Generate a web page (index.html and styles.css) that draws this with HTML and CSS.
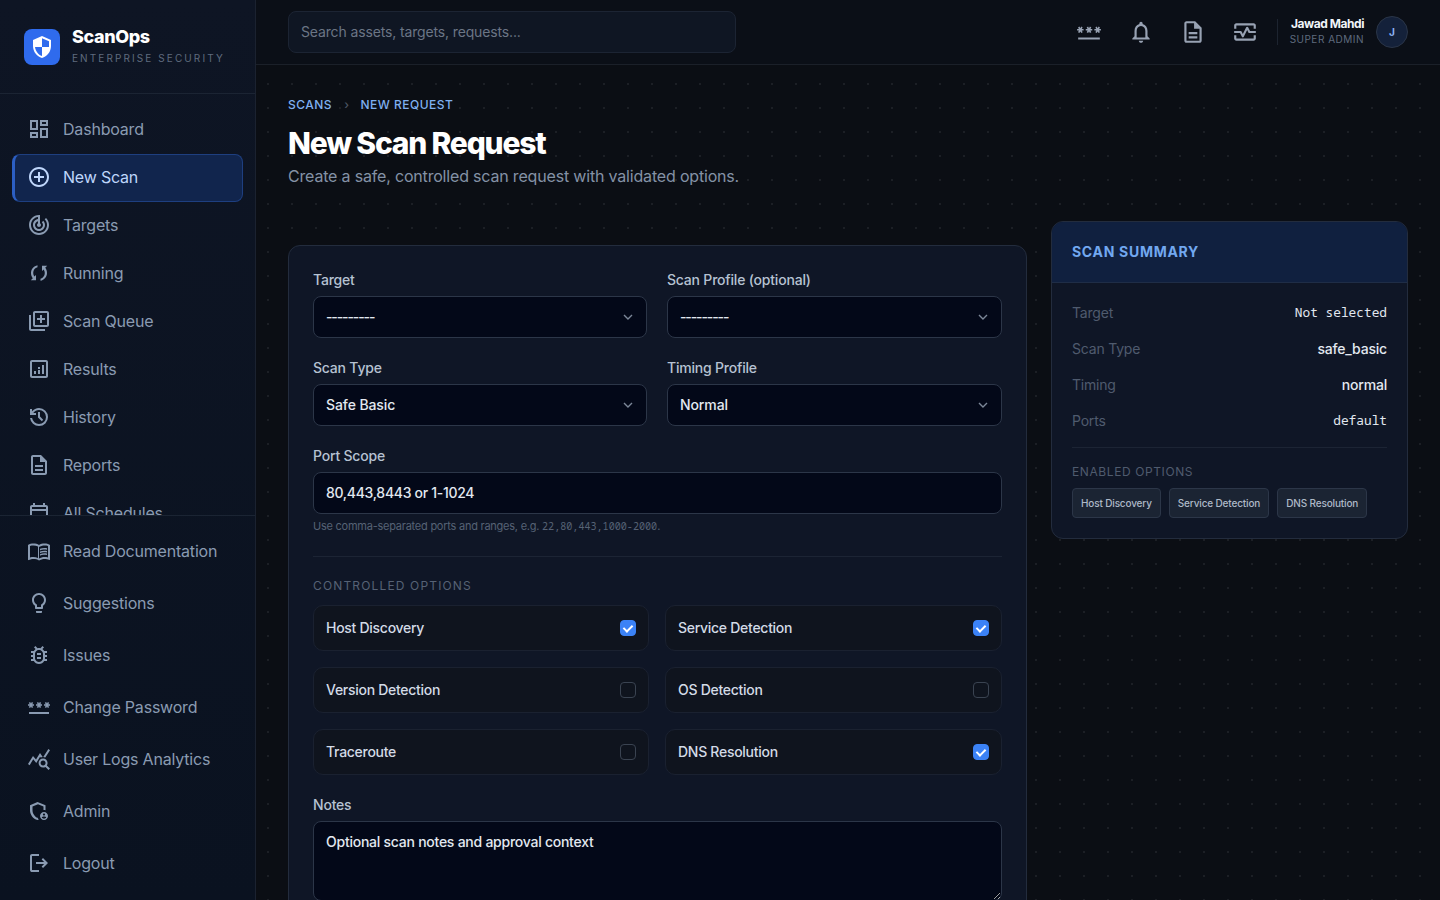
FILE: index.html
```html
<!DOCTYPE html>
<html lang="en">
<head>
  <meta charset="UTF-8" />
  <meta name="viewport" content="width=device-width, initial-scale=1.0"/>
  <title>ScanOps - New Scan Request</title>
  <link rel="stylesheet" href="styles.css">
</head>
<body>

<div class="app">

  <!-- Sidebar -->
  <aside class="sidebar">
    <div class="brand">
      <div class="brand-logo">
        <svg viewBox="0 0 24 24" width="24" height="24"><path fill="#fff" transform="translate(24,0) scale(-1,1)" d="M12 1L3 5v6c0 5.55 3.84 10.74 9 12 5.16-1.26 9-6.45 9-12V5l-9-4zm0 10.99h7c-.53 4.12-3.28 7.79-7 8.94V12H5V6.3l7-3.11v8.8z"/></svg>
      </div>
      <div class="brand-text">
        <div class="brand-name">ScanOps</div>
        <div class="brand-sub">ENTERPRISE SECURITY</div>
      </div>
    </div>

    <nav class="nav-main">
      <a class="nav-item" href="#"><svg viewBox="0 0 24 24"><path d="M19 5v2h-4V5h4M9 5v6H5V5h4m10 8v6h-4v-6h4M9 17v2H5v-2h4M21 3h-8v6h8V3zM11 3H3v10h8V3zm10 8h-8v10h8V11zm-10 4H3v6h8v-6z"/></svg>Dashboard</a>
      <a class="nav-item active" href="#"><svg viewBox="0 0 24 24"><path d="M13 7h-2v4H7v2h4v4h2v-4h4v-2h-4V7zm-1-5C6.48 2 2 6.48 2 12s4.48 10 10 10 10-4.48 10-10S17.52 2 12 2zm0 18c-4.41 0-8-3.59-8-8s3.59-8 8-8 8 3.59 8 8-3.59 8-8 8z"/></svg>New Scan</a>
      <a class="nav-item" href="#"><svg viewBox="0 0 24 24"><path d="M19.07 4.93l-1.41 1.41C19.1 7.79 20 9.79 20 12c0 4.42-3.58 8-8 8s-8-3.58-8-8c0-4.08 3.05-7.44 7-7.93v2.02C8.16 6.57 6 9.03 6 12c0 3.31 2.69 6 6 6s6-2.69 6-6c0-1.66-.67-3.16-1.76-4.24l-1.41 1.41C15.55 9.9 16 10.9 16 12c0 2.21-1.79 4-4 4s-4-1.79-4-4c0-1.86 1.28-3.41 3-3.86v2.14c-.6.35-1 .98-1 1.72 0 1.1.9 2 2 2s2-.9 2-2c0-.74-.4-1.38-1-1.72V2h-1C6.48 2 2 6.48 2 12s4.48 10 10 10 10-4.48 10-10c0-2.76-1.12-5.26-2.93-7.07z"/></svg>Targets</a>
      <a class="nav-item" href="#"><svg viewBox="0 0 24 24"><path d="M10.500 4.200v2.100C7.900 7 6.200 9.300 6.200 12c0 1.300.4 2.500 1.100 3.500L9 14v5.200H3.800l2-2C4.600 15.800 4 14 4 12c0-3.800 2.800-7 6.500-7.800zM13.500 19.800v-2.100C16.100 17 17.800 14.700 17.800 12c0-1.300-.4-2.500-1.100-3.500L15 10V4.800h5.200l-2 2C19.400 8.200 20 10 20 12c0 3.800-2.800 7-6.500 7.800z"/></svg>Running</a>
      <a class="nav-item" href="#"><svg viewBox="0 0 24 24"><path d="M4 6H2v14c0 1.100.9 2 2 2h14v-2H4V6zm16-4H8c-1.100 0-2 .9-2 2v12c0 1.100.9 2 2 2h12c1.100 0 2-.9 2-2V4c0-1.100-.9-2-2-2zm0 14H8V4h12v12zM13 14h2v-3h3V9h-3V6h-2v3h-3v2h3z"/></svg>Scan Queue</a>
      <a class="nav-item" href="#"><svg viewBox="0 0 24 24"><path d="M19 3H5c-1.100 0-2 .9-2 2v14c0 1.100.9 2 2 2h14c1.100 0 2-.9 2-2V5c0-1.100-.9-2-2-2zm0 16H5V5h14v14zM7 14h2v3H7zM15 8h2v9h-2zM11 13h2v4h-2zM11 10h2v2h-2z"/></svg>Results</a>
      <a class="nav-item" href="#"><svg viewBox="0 0 24 24"><path d="M12 21q-3.450 0-6.012-2.287T3.050 13H5.100q.35 2.600 2.313 4.300T12 19q2.925 0 4.963-2.037T19 12t-2.037-4.963T12 5q-1.725 0-3.225.8T6.250 8H9v2H3V4h2v2.350q1.275-1.600 3.113-2.475T12 3q3.750 0 6.375 2.625T21 12t-2.625 6.375T12 21m2.800-4.800L11 12.400V7h2v4.600l3.200 3.200z"/></svg>History</a>
      <a class="nav-item" href="#"><svg viewBox="0 0 24 24"><path d="M8 16h8v2H8zm0-4h8v2H8zm6-10H6c-1.100 0-2 .9-2 2v16c0 1.100.89 2 1.990 2H18c1.100 0 2-.9 2-2V8l-6-6zm4 18H6V4h7v5h5v11z"/></svg>Reports</a>
      <a class="nav-item" href="#"><svg viewBox="0 0 24 24"><path d="M19 4h-1V2h-2v2H8V2H6v2H5c-1.100 0-2 .9-2 2v14c0 1.100.9 2 2 2h14c1.100 0 2-.9 2-2V6c0-1.100-.9-2-2-2zm0 16H5V10h14v10zm0-12H5V6h14v2z"/></svg>All Schedules</a>
    </nav>

    <nav class="nav-bottom">
      <a class="nav-item" href="#"><svg viewBox="0 0 24 24" fill-rule="evenodd"><path d="M21 5c-1.110-.35-2.330-.5-3.500-.5-1.950 0-4.050.4-5.500 1.500-1.450-1.100-3.550-1.500-5.500-1.500S2.450 4.900 1 6v14.650c0 .25.25.5.5.5.1 0 .15-.05.25-.05C3.100 20.450 5.050 20 6.500 20c1.950 0 4.050.4 5.500 1.500 1.350-.85 3.800-1.500 5.500-1.500 1.650 0 3.350.3 4.750 1.050.1.05.15.05.25.05.25 0 .5-.25.5-.5V6c-.6-.45-1.250-.75-2-1zm0 13.500c-1.100-.35-2.300-.5-3.500-.5-1.700 0-4.150.65-5.500 1.500V8c1.350-.85 3.800-1.500 5.500-1.500 1.200 0 2.400.15 3.500.5v11.500zM3 18.500V7c1.100-.35 2.300-.5 3.500-.5 1.340 0 3.130.41 4.500.99v11.500C9.630 18.410 7.840 18 6.500 18c-1.200 0-2.400.15-3.500.5zM17.500 10.500c.88 0 1.730.09 2.500.26V9.240c-.79-.15-1.640-.24-2.500-.24-1.700 0-3.240.29-4.500.83v1.660c1.130-.64 2.700-.99 4.500-.99zM13 12.490v1.660c1.130-.64 2.700-.99 4.500-.99.88 0 1.730.09 2.500.26V11.900c-.79-.15-1.640-.24-2.500-.24-1.700 0-3.240.3-4.500.83zM17.500 14.330c-1.700 0-3.240.29-4.500.83v1.660c1.130-.64 2.700-.99 4.500-.99.88 0 1.730.09 2.500.26v-1.520c-.79-.16-1.640-.24-2.500-.24z"/></svg>Read Documentation</a>
      <a class="nav-item" href="#"><svg viewBox="0 0 24 24"><path d="M9 21c0 .55.45 1 1 1h4c.55 0 1-.45 1-1v-1H9v1zm3-19C8.140 2 5 5.140 5 9c0 2.380 1.190 4.470 3 5.740V17c0 .55.45 1 1 1h6c.55 0 1-.45 1-1v-2.260c1.810-1.270 3-3.360 3-5.740 0-3.860-3.140-7-7-7zm2.850 11.100l-.85.6V16h-4v-2.300l-.85-.6C7.800 12.160 7 10.630 7 9c0-2.760 2.240-5 5-5s5 2.240 5 5c0 1.630-.8 3.160-2.150 4.100z"/></svg>Suggestions</a>
      <a class="nav-item" href="#"><svg viewBox="0 0 24 24"><path d="M20 8h-2.810c-.45-.78-1.070-1.450-1.820-1.960L17 4.410 15.590 3l-2.170 2.170C12.960 5.060 12.490 5 12 5s-.96.06-1.410.17L8.410 3 7 4.410l1.620 1.630C7.880 6.550 7.260 7.220 6.810 8H4v2h2.090c-.05.33-.09.66-.09 1v1H4v2h2v1c0 .34.04.67.09 1H4v2h2.810c1.040 1.790 2.970 3 5.190 3s4.150-1.210 5.190-3H20v-2h-2.090c.05-.33.09-.66.09-1v-1h2v-2h-2v-1c0-.34-.04-.67-.09-1H20V8zm-4 4v3c0 .22-.03.47-.07.7l-.1.65-.37.65c-.72 1.240-2.040 2-3.460 2s-2.740-.77-3.460-2l-.37-.64-.1-.65C8.030 15.480 8 15.230 8 15v-4c0-.23.03-.48.07-.7l.1-.65.37-.65c.3-.52.72-.97 1.210-1.310l.57-.39.74-.18c.31-.08.63-.12.94-.12.32 0 .63.04.95.12l.68.16.61.42c.5.34.91.78 1.210 1.310l.38.65.1.65c.04.22.07.47.07.69v1zm-6 2h4v2h-4zm0-4h4v2h-4z"/></svg>Issues</a>
      <a class="nav-item" href="#"><svg viewBox="0 0 24 24"><path d="M2 17h20v2H2v-2zm1.150-4.050L4 11.470l.85 1.480 1.300-.75-.85-1.480H7v-1.500H5.300l.85-1.470L4.850 7 4 8.470 3.150 7l-1.300.75.85 1.470H1v1.500h1.700l-.85 1.480 1.300.75zm6.700-.75l1.300.75.85-1.480.85 1.480 1.300-.75-.85-1.480H15v-1.500h-1.700l.85-1.470-1.300-.75L12 8.470 11.150 7l-1.300.75.85 1.470H9v1.500h1.700l-.85 1.480zM23 9.220h-1.700l.85-1.470-1.300-.75L20 8.470 19.150 7l-1.300.75.85 1.470H17v1.500h1.700l-.85 1.480 1.300.75.85-1.480.85 1.480 1.300-.75-.85-1.480H23v-1.500z"/></svg>Change Password</a>
      <a class="nav-item" href="#"><svg viewBox="0 0 24 24"><path d="M19.880 18.470c.44-.7.7-1.510.7-2.390 0-2.490-2.010-4.500-4.500-4.500s-4.500 2.010-4.500 4.500 2.010 4.500 4.490 4.500c.88 0 1.700-.26 2.390-.7L21.580 23 23 21.580l-3.120-3.110zm-3.800.11c-1.380 0-2.500-1.120-2.500-2.500s1.120-2.500 2.500-2.500 2.500 1.120 2.500 2.500-1.120 2.500-2.500 2.500zm-.36-8.500c-.74.02-1.450.18-2.100.45l-.55-.83-3.800 6.180-3.010-3.520-3.630 5.810L1 17l5-8 3 3.500L13 6l2.720 4.080zm2.590.5c-.64-.28-1.330-.45-2.050-.49L21.380 2 23 3.180l-4.690 7.400z"/></svg>User Logs Analytics</a>
      <a class="nav-item" href="#"><svg viewBox="0 0 24 24"><path d="M17 13c-2.210 0-4 1.790-4 4s1.790 4 4 4 4-1.790 4-4-1.790-4-4-4zm0 1.380c.62 0 1.120.51 1.120 1.120s-.51 1.120-1.120 1.120-1.120-.51-1.120-1.120.5-1.120 1.120-1.120zm0 5.370c-.93 0-1.740-.46-2.240-1.170.05-.72 1.510-1.080 2.240-1.080s2.190.36 2.240 1.080c-.5.71-1.310 1.170-2.240 1.170z"/><path d="M10.500 3L3 6.270v4.910c0 4.540 3.200 8.790 7.500 9.820.47-.11.92-.27 1.360-.46-.5-.5-.9-1.100-1.200-1.700-2.960-1.160-5.160-4.440-5.160-7.660V7.580l5.500-2.400 5.500 2.400V11c.7 0 1.400.05 2 .2V6.270L10.500 3z"/></svg>Admin</a>
      <a class="nav-item" href="#"><svg viewBox="0 0 24 24"><path d="M5 21q-.825 0-1.412-.587T3 19V5q0-.825.588-1.412T5 3h7v2H5v14h7v2zm11-4l-1.375-1.450 2.550-2.550H9v-2h8.175l-2.550-2.550L16 7l5 5z"/></svg>Logout</a>
    </nav>
  </aside>

  <div class="main">

    <!-- Topbar -->
    <header class="topbar">
      <input class="search" type="text" placeholder="Search assets, targets, requests...">
      <div class="top-actions">
        <button class="icon-btn"><svg viewBox="0 0 24 24"><path d="M2 17h20v2H2v-2zm1.150-4.050L4 11.470l.85 1.480 1.300-.75-.85-1.480H7v-1.500H5.300l.85-1.470L4.850 7 4 8.470 3.150 7l-1.300.75.85 1.470H1v1.500h1.700l-.85 1.480 1.300.75zm6.700-.75l1.300.75.85-1.480.85 1.480 1.300-.75-.85-1.480H15v-1.500h-1.700l.85-1.470-1.300-.75L12 8.470 11.150 7l-1.300.75.85 1.470H9v1.500h1.700l-.85 1.480zM23 9.220h-1.700l.85-1.470-1.300-.75L20 8.470 19.150 7l-1.300.75.85 1.470H17v1.500h1.700l-.85 1.480 1.300.75.85-1.480.85 1.480 1.300-.75-.85-1.480H23v-1.500z"/></svg></button>
        <button class="icon-btn"><svg viewBox="0 0 24 24"><path d="M12 22c1.100 0 2-.9 2-2h-4c0 1.100.9 2 2 2zm6-6v-5c0-3.070-1.630-5.640-4.500-6.320V4c0-.83-.67-1.500-1.500-1.500s-1.500.67-1.500 1.500v.68C7.640 5.360 6 7.920 6 11v5l-2 2v1h16v-1l-2-2zm-2 1H8v-6c0-2.480 1.510-4.500 4-4.500s4 2.020 4 4.500v6z"/></svg></button>
        <button class="icon-btn"><svg viewBox="0 0 24 24"><path d="M8 16h8v2H8zm0-4h8v2H8zm6-10H6c-1.100 0-2 .9-2 2v16c0 1.100.89 2 1.990 2H18c1.100 0 2-.9 2-2V8l-6-6zm4 18H6V4h7v5h5v11z"/></svg></button>
        <button class="icon-btn"><svg viewBox="0 0 24 24"><path d="M20 4H4c-1.100 0-2 .9-2 2v3h2V6h16v3h2V6c0-1.100-.9-2-2-2zM20 18H4v-3H2v3c0 1.100.9 2 2 2h16c1.100 0 2-.9 2-2v-3h-2v3zM14.890 7.550c-.34-.68-1.450-.68-1.790 0L10 13.760l-1.110-2.210C8.720 11.210 8.380 11 8 11H2v2h5.380l1.720 3.450c.18.34.52.55.9.55s.72-.21.89-.55L14 10.240l1.110 2.210c.17.34.51.55.89.55h6v-2h-5.380l-1.730-3.450z"/></svg></button>
        <div class="top-divider"></div>
        <div class="user-info">
          <div class="user-name">Jawad Mahdi</div>
          <div class="user-role">SUPER ADMIN</div>
        </div>
        <div class="avatar">J</div>
      </div>
    </header>

    <main class="content">
      <div class="crumbs"><span>SCANS</span><i>›</i><span>NEW REQUEST</span></div>
      <h1>New Scan Request</h1>
      <p class="subtitle">Create a safe, controlled scan request with validated options.</p>

      <div class="layout">

        <!-- Form -->
        <form class="card form-card">
          <div class="row-2">
            <div class="field">
              <label>Target</label>
              <div class="select-wrap">
                <select class="empty"><option>---------</option></select>
                <svg class="chev" viewBox="0 0 12 12"><path d="M2 4l4 4 4-4"/></svg>
              </div>
            </div>
            <div class="field">
              <label>Scan Profile (optional)</label>
              <div class="select-wrap">
                <select class="empty"><option>---------</option></select>
                <svg class="chev" viewBox="0 0 12 12"><path d="M2 4l4 4 4-4"/></svg>
              </div>
            </div>
          </div>
          <div class="row-2">
            <div class="field">
              <label>Scan Type</label>
              <div class="select-wrap">
                <select><option>Safe Basic</option></select>
                <svg class="chev" viewBox="0 0 12 12"><path d="M2 4l4 4 4-4"/></svg>
              </div>
            </div>
            <div class="field">
              <label>Timing Profile</label>
              <div class="select-wrap">
                <select><option>Normal</option></select>
                <svg class="chev" viewBox="0 0 12 12"><path d="M2 4l4 4 4-4"/></svg>
              </div>
            </div>
          </div>
          <div class="field">
            <label>Port Scope</label>
            <input class="text-input" type="text" value="80,443,8443 or 1-1024">
            <div class="hint">Use comma-separated ports and ranges, e.g. <code>22,80,443,1000-2000</code>.</div>
          </div>

          <hr class="sep">

          <div class="section-label">CONTROLLED OPTIONS</div>
          <div class="options">
            <label class="option">Host Discovery<input type="checkbox" checked></label>
            <label class="option">Service Detection<input type="checkbox" checked></label>
            <label class="option">Version Detection<input type="checkbox"></label>
            <label class="option">OS Detection<input type="checkbox"></label>
            <label class="option">Traceroute<input type="checkbox"></label>
            <label class="option">DNS Resolution<input type="checkbox" checked></label>
          </div>

          <div class="field notes">
            <label>Notes</label>
            <textarea placeholder="Optional scan notes and approval context"></textarea>
          </div>
        </form>

        <!-- Summary -->
        <section class="card summary">
          <div class="summary-head">SCAN SUMMARY</div>
          <div class="summary-body">
            <div class="sum-row"><span>Target</span><b class="mono">Not selected</b></div>
            <div class="sum-row"><span>Scan Type</span><b>safe_basic</b></div>
            <div class="sum-row"><span>Timing</span><b>normal</b></div>
            <div class="sum-row"><span>Ports</span><b class="mono">default</b></div>
            <hr class="sep">
            <div class="enabled-label">ENABLED OPTIONS</div>
            <div class="chips">
              <span class="chip">Host Discovery</span>
              <span class="chip">Service Detection</span>
              <span class="chip">DNS Resolution</span>
            </div>
          </div>
        </section>

      </div>
    </main>
  </div>
</div>

</body>
</html>
```

FILE: styles.css
```css
* {
  box-sizing: border-box;
}

html, body {
  height: 100%;
  margin: 0;
  overflow: hidden;
}

body {
  font-family: 'Inter', 'Noto Sans', sans-serif;
  background: #0b0e14;
  color: #cbd5e1;
}

.app {
  display: flex;
  height: 100vh;
}

/* Sidebar */
.sidebar {
  width: 256px;
  flex-shrink: 0;
  display: flex;
  flex-direction: column;
  background: linear-gradient(180deg, #0e1524 0%, #0a1220 100%);
  border-right: 1px solid #1b2230;
}

.brand {
  height: 94px;
  flex-shrink: 0;
  display: flex;
  align-items: center;
  gap: 12px;
  padding: 0 24px;
  border-bottom: 1px solid #1b2433;
}

.brand-logo {
  width: 36px;
  height: 36px;
  border-radius: 8px;
  background: #2f6bed;
  display: flex;
  align-items: center;
  justify-content: center;
}

.brand-text {
  margin-bottom: 3px;
}

.brand-name {
  font-size: 18px;
  font-weight: 800;
  color: #fff;
  letter-spacing: -0.4px;
  line-height: 24px;
}

.brand-sub {
  font-size: 10px;
  letter-spacing: 2.1px;
  color: #5f6b7e;
  line-height: 16px;
  margin-top: 1px;
}

.nav-main {
  flex: 1;
  min-height: 0;
  overflow: hidden;
  padding: 12px 12px 0;
}

.nav-bottom {
  flex-shrink: 0;
  height: 385px;
  padding: 9px 12px 0;
  border-top: 1px solid #1b2433;
}

.nav-item {
  display: flex;
  align-items: center;
  gap: 12px;
  height: 48px;
  padding-left: 14px;
  padding-bottom: 2px;
  font-size: 16px;
  letter-spacing: -0.2px;
  color: #8a9bb2;
  text-decoration: none;
  border: 1px solid transparent;
  border-radius: 8px;
}

.nav-item svg {
  width: 24px;
  height: 24px;
  flex-shrink: 0;
  fill: currentColor;
}

.nav-bottom .nav-item {
  height: 52px;
  padding-bottom: 0;
}

.nav-item.active {
  background: #11254d;
  border-color: #1e3f80;
  border-left: 3px solid #2c5fc4;
  padding-left: 12px;
  color: #bfd6fb;
}

/* Main column */
.main {
  flex: 1;
  min-width: 0;
  display: flex;
  flex-direction: column;
  background-color: #0b0e14;
  background-image: radial-gradient(circle at 12px 12px, rgba(255,255,255,0.07) 1px, transparent 1.2px);
  background-size: 24px 24px;
}

.topbar {
  height: 65px;
  flex-shrink: 0;
  display: flex;
  align-items: center;
  justify-content: space-between;
  padding: 0 32px;
  background: #0b0f17;
  border-bottom: 1px solid #1b2029;
}

.search {
  width: 448px;
  height: 42px;
  padding: 0 12px 2px;
  font-family: inherit;
  font-size: 14px;
  letter-spacing: -0.14px;
  color: #cbd5e1;
  background: #0f1623;
  border: 1px solid #1c2433;
  border-radius: 8px;
}

.search::placeholder {
  color: #6b7585;
}

.top-actions {
  display: flex;
  align-items: center;
}

.icon-btn {
  width: 28px;
  height: 28px;
  padding: 1px;
  margin-right: 24px;
  background: none;
  border: none;
  color: #98a2b3;
}

.icon-btn svg {
  width: 26px;
  height: 26px;
  fill: currentColor;
  display: block;
}

.icon-btn:nth-child(4) {
  margin-right: 18px;
}

.top-divider {
  width: 1px;
  height: 26px;
  background: #1d2430;
  margin-right: 12px;
}

.user-info {
  text-align: right;
  margin-right: 12px;
  margin-bottom: 2px;
}

.user-name {
  font-size: 12px;
  font-weight: 700;
  color: #f1f5f9;
  letter-spacing: -0.45px;
  line-height: 16px;
}

.user-role {
  font-size: 10px;
  letter-spacing: 0.5px;
  color: #5f6b7e;
  line-height: 14px;
}

.avatar {
  width: 32px;
  height: 32px;
  border-radius: 50%;
  display: flex;
  align-items: center;
  justify-content: center;
  background: #14213a;
  border: 1px solid #2a3548;
  color: #8fb6f5;
  font-size: 10px;
  font-weight: 700;
}

/* Content */
.content {
  flex: 1;
  min-height: 0;
  padding: 31px 32px 0;
}

.crumbs {
  display: flex;
  align-items: center;
  gap: 12px;
  height: 16px;
  font-size: 12px;
  font-weight: 500;
  letter-spacing: 0.5px;
  color: #7fb0f0;
}

.crumbs i {
  font-style: normal;
  color: #4b5563;
  margin-right: -1px;
}

h1 {
  margin: 12px 0 0;
  font-size: 30px;
  line-height: 38px;
  font-weight: 800;
  letter-spacing: -1.2px;
  color: #fff;
}

.subtitle {
  margin: 2px 0 0;
  font-size: 16px;
  line-height: 24px;
  letter-spacing: -0.18px;
  color: #8492a6;
}

.layout {
  display: grid;
  grid-template-columns: 739px 357px;
  gap: 24px;
  align-items: start;
  margin-top: 33px;
}

.card {
  background: #0f1626;
  border: 1px solid #232c3d;
  border-radius: 12px;
}

.form-card {
  margin-top: 24px;
  padding: 24px;
}

.row-2 {
  display: grid;
  grid-template-columns: 334px 1fr;
  gap: 20px;
  margin-bottom: 20px;
}

.field label {
  display: block;
  font-size: 14px;
  line-height: 20px;
  font-weight: 500;
  letter-spacing: -0.2px;
  color: #b6c2d2;
  margin-bottom: 6px;
}

.select-wrap {
  position: relative;
}

select, .text-input, textarea {
  display: block;
  width: 100%;
  font-family: inherit;
  font-size: 14px;
  font-weight: 500;
  letter-spacing: -0.1px;
  color: #e2e8f0;
  background: #030818;
  border: 1px solid #2c3648;
  border-radius: 8px;
}

select, .text-input {
  height: 42px;
  padding: 0 12px 2px;
}

.text-input {
  letter-spacing: -0.3px;
}

select {
  appearance: none;
}

select.empty {
  letter-spacing: -1.1px;
}

.chev {
  position: absolute;
  right: 13px;
  top: 15px;
  width: 12px;
  height: 12px;
  fill: none;
  stroke: #7c8798;
  stroke-width: 1.4;
}

.hint {
  margin-top: 6px;
  font-size: 11px;
  line-height: 12px;
  letter-spacing: -0.24px;
  color: #566275;
}

.hint code {
  font-family: 'Noto Sans Mono', 'DejaVu Sans Mono', monospace;
  font-size: 10.1px;
  letter-spacing: 0;
}

.sep {
  border: none;
  border-top: 1px solid #1c2434;
  margin: 24px 0 0;
}

.section-label {
  margin-top: 22px;
  font-size: 12px;
  line-height: 14px;
  letter-spacing: 1.15px;
  color: #566275;
}

.options {
  display: grid;
  grid-template-columns: 336px 1fr;
  gap: 16px;
  margin-top: 12px;
}

.option {
  display: flex;
  align-items: center;
  justify-content: space-between;
  height: 46px;
  padding: 0 12px 1px;
  font-size: 14px;
  font-weight: 500;
  letter-spacing: -0.28px;
  color: #d3dbe6;
  background: #0f141e;
  border: 1px solid #1a2130;
  border-radius: 10px;
}

.option input {
  appearance: none;
  position: relative;
  width: 16px;
  height: 16px;
  margin: 0;
  background: transparent;
  border: 1px solid #3a4351;
  border-radius: 4px;
}

.option input:checked {
  background: #3b82f6;
  border-color: #3b82f6;
}

.option input:checked::after {
  content: "";
  position: absolute;
  left: 4px;
  top: 2px;
  width: 4px;
  height: 7px;
  border: solid #fff;
  border-width: 0 2px 2px 0;
  transform: rotate(45deg);
}

.notes {
  margin-top: 20px;
}

textarea {
  height: 80px;
  padding: 11px 12px;
  letter-spacing: -0.25px;
}

textarea::placeholder {
  color: #e2e8f0;
  opacity: 1;
}

/* Summary */
.summary {
  overflow: hidden;
}

.summary-head {
  height: 61px;
  padding: 0 20px 2px;
  display: flex;
  align-items: center;
  font-size: 14px;
  font-weight: 700;
  letter-spacing: 0.7px;
  color: #72a8f0;
  background: #10203f;
  border-bottom: 1px solid #1f2d46;
}

.summary-body {
  padding: 12px 20px 20px;
}

.sum-row {
  display: flex;
  align-items: center;
  justify-content: space-between;
  height: 36px;
  padding-bottom: 2px;
  font-size: 14px;
  letter-spacing: -0.2px;
  color: #4f5b6e;
}

.sum-row b {
  font-weight: 500;
  color: #e2e8f0;
}

.sum-row .mono {
  font-family: 'Noto Sans Mono', 'DejaVu Sans Mono', monospace;
  font-size: 12.8px;
  font-weight: 400;
  letter-spacing: 0;
}

.summary .sep {
  margin-top: 8px;
}

.enabled-label {
  margin-top: 17px;
  font-size: 12px;
  line-height: 14px;
  letter-spacing: 0.6px;
  color: #4f5b6e;
}

.chips {
  display: flex;
  gap: 8px;
  margin-top: 9px;
}

.chip {
  height: 30px;
  display: flex;
  align-items: center;
  padding: 0 8px;
  font-size: 10px;
  font-weight: 500;
  letter-spacing: -0.15px;
  color: #aeb9c8;
  background: #1b2433;
  border: 1px solid #2c3648;
  border-radius: 4px;
}
```
